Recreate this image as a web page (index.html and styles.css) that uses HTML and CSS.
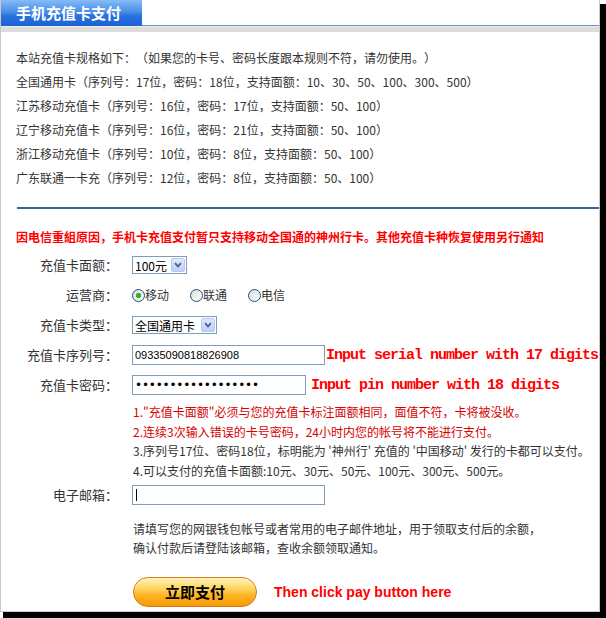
FILE: index.html
```html
<!DOCTYPE html>
<html lang="zh-CN">
<head>
  <meta charset="utf-8">
  <title>手机充值卡支付</title>
  <link rel="stylesheet" href="styles.css">
</head>
<body>

 <div class="frame">
  <div class="panel">
    <div class="tabbar">
      <div class="tab">手机充值卡支付</div>
      <div class="tabrest"></div>
    </div>
    <div class="band"></div>

    <div class="content">
      <ul class="rules">
        <li>本站充值卡规格如下：（如果您的卡号、密码长度跟本规则不符，请勿使用。）</li>
        <li>全国通用卡（序列号：17位，密码：18位，支持面额：10、30、50、100、300、500）</li>
        <li>江苏移动充值卡（序列号：16位，密码：17位，支持面额：50、100）</li>
        <li>辽宁移动充值卡（序列号：16位，密码：21位，支持面额：50、100）</li>
        <li>浙江移动充值卡（序列号：10位，密码：8位，支持面额：50、100）</li>
        <li>广东联通一卡充（序列号：12位，密码：8位，支持面额：50、100）</li>
      </ul>

      <div class="divider"></div>

      <p class="notice">因电信重組原因，手机卡充值支付暂只支持移动全国通的神州行卡。其他充值卡种恢复使用另行通知</p>

      <form class="payForm" onsubmit="return false;">
        <div class="row">
          <label for="amount">充值卡面额：</label>
          <div class="field">
            <span class="select selAmount">
              <select id="amount">
                <option>100元</option>
                <option>50元</option>
                <option>30元</option>
              </select>
              <i class="arrow"><svg width="8" height="6" viewBox="0 0 8 6"><path d="M1 1.2 L4 4.4 L7 1.2" stroke="#4d6185" stroke-width="1.8" fill="none"/></svg></i>
            </span>
          </div>
        </div>

        <div class="row">
          <label>运营商：</label>
          <div class="field radios">
            <label class="radio"><input type="radio" name="op" checked>移动</label>
            <label class="radio"><input type="radio" name="op">联通</label>
            <label class="radio"><input type="radio" name="op">电信</label>
          </div>
        </div>

        <div class="row">
          <label for="cardType">充值卡类型：</label>
          <div class="field">
            <span class="select selType">
              <select id="cardType">
                <option>全国通用卡</option>
                <option>江苏移动充值卡</option>
              </select>
              <i class="arrow"><svg width="8" height="6" viewBox="0 0 8 6"><path d="M1 1.2 L4 4.4 L7 1.2" stroke="#4d6185" stroke-width="1.8" fill="none"/></svg></i>
            </span>
          </div>
        </div>

        <div class="row">
          <label for="serial">充值卡序列号：</label>
          <div class="field">
            <input type="text" id="serial" class="textInput wide" value="09335090818826908">
            <span class="hint hintSerial">Input serial number with 17 digits</span>
          </div>
        </div>

        <div class="row">
          <label for="pin">充值卡密码：</label>
          <div class="field">
            <input type="password" id="pin" class="textInput pin" value="123456789012345678">
            <span class="hint hintPin">Input pin number with 18 digits</span>
          </div>
        </div>

        <ol class="notes">
          <li class="warn">1."充值卡面额"必须与您的充值卡标注面额相同，面值不符，卡将被没收。</li>
          <li class="warn">2.连续3次输入错误的卡号密码，24小时内您的帐号将不能进行支付。</li>
          <li>3.序列号17位、密码18位，标明能为 '神州行' 充值的 '中国移动' 发行的卡都可以支付。</li>
          <li>4.可以支付的充值卡面额:10元、30元、50元、100元、300元、500元。</li>
        </ol>

        <div class="row">
          <label for="email">电子邮箱：</label>
          <div class="field">
            <span class="caretWrap">
              <input type="text" id="email" class="textInput wide">
              <i class="caret"></i>
            </span>
          </div>
        </div>

        <p class="help">请填写您的网银钱包帐号或者常用的电子邮件地址，用于领取支付后的余额，<br>确认付款后请登陆该邮箱，查收余额领取通知。</p>

        <div class="payRow">
          <button type="submit" class="payBtn">立即支付</button>
          <span class="payHint">Then click pay button here</span>
        </div>
      </form>
    </div>
  </div>
 </div>

</body>
</html>
```

FILE: styles.css
```css
* {
  box-sizing: border-box;
}

body {
  margin: 0;
  background: #fff;
  color: #333;
  font-family: "Noto Sans CJK SC", sans-serif;
  font-size: 12px;
  text-spacing-trim: space-all;
}

/* black drop shadow on the right and bottom */
.frame {
  width: 606px;
  height: 618px;
  background:
    linear-gradient(#000, #000) right 0 bottom 0 / 6px 614px no-repeat,
    linear-gradient(#000, #000) right 0 bottom 0 / 603px 6px no-repeat;
}

.panel {
  width: 600px;
  height: 612px;
  border: 1px solid #c9c9c9;
  border-top: 0;
  background: #fff;
}

.tabbar {
  display: flex;
  height: 26px;
}

.tab {
  width: 141px;
  padding-left: 15px;
  background: linear-gradient(#86bbf6, #4a8fe9 45%, #2a72de 60%, #1b62d4);
  color: #fff;
  font-size: 15px;
  font-weight: bold;
  line-height: 26px;
}

.tabrest {
  flex: 1;
  border-bottom: 1px solid #5b8fd6;
}

.band {
  height: 6px;
  background: #dcdcdc;
  border-top: 1px solid #efefef;
}

.content {
  padding: 14px 0 0 15px;
}

.rules {
  margin: 0;
  padding: 0;
  list-style: none;
  line-height: 24px;
  white-space: nowrap;
}

.divider {
  height: 2px;
  margin: 17px 0 0 1px;
  background: #35679f;
}

.notice {
  margin: 18px 0 0;
  color: #f00;
  font-weight: bold;
  line-height: 20px;
  white-space: nowrap;
}

.payForm {
  margin-top: 3px;
}

.row {
  display: grid;
  grid-template-columns: 102px 1fr;
  column-gap: 14px;
  align-items: center;
  height: 30px;
}

.row > label {
  text-align: right;
  font-size: 13px;
  line-height: 20px;
  white-space: nowrap;
}

.field {
  display: flex;
  align-items: center;
}

.select {
  position: relative;
  display: inline-block;
  height: 18px;
  border: 1px solid #7f9db9;
  background: #fff;
}

.select select {
  appearance: none;
  width: 100%;
  height: 16px;
  padding: 0 0 0 2px;
  border: 0;
  background: transparent;
  color: #000;
  font-family: "Noto Sans CJK SC", sans-serif;
  font-size: 12px;
  line-height: 16px;
}

.selAmount {
  width: 55px;
}

.selType {
  width: 85px;
}

.arrow {
  position: absolute;
  top: 1px;
  right: 1px;
  width: 14px;
  height: 14px;
  display: flex;
  align-items: center;
  justify-content: center;
  border: 1px solid #b5c8f2;
  border-radius: 2px;
  background: linear-gradient(#dfe8fd, #bccff8);
  pointer-events: none;
}

.radios {
  gap: 21px;
}

.radio {
  display: flex;
  align-items: center;
  font-size: 12px;
  line-height: 20px;
}

.radio input {
  appearance: none;
  width: 13px;
  height: 13px;
  margin: 0;
  border: 1px solid #1c5180;
  border-radius: 50%;
  background: linear-gradient(135deg, #dcdcd5, #fff);
}

.radio input:checked {
  background: radial-gradient(circle, #2fb32f 0 2.4px, transparent 3px), linear-gradient(135deg, #dcdcd5, #fff);
}

.textInput {
  height: 20px;
  padding: 0 2px;
  border: 1px solid #7f9db9;
  color: #000;
  font-family: "Liberation Sans", sans-serif;
  font-size: 11px;
  outline: none;
}

.wide {
  width: 193px;
}

.pin {
  width: 174px;
  font-family: "DejaVu Sans", sans-serif;
  font-size: 12px;
  letter-spacing: -0.2px;
}

.caretWrap {
  position: relative;
  display: inline-block;
}

.caret {
  position: absolute;
  left: 4px;
  top: 4px;
  width: 1px;
  height: 12px;
  background: #000;
}

.hint {
  color: #f00;
  font-family: "Liberation Mono", monospace;
  font-size: 15px;
  font-weight: bold;
  letter-spacing: -1px;
  white-space: nowrap;
}

.hintSerial {
  margin-left: 1px;
}

.hintPin {
  margin-left: 5px;
}

.notes {
  margin: 2px 0 0 117px;
  padding: 0;
  list-style: none;
  line-height: 19.5px;
  white-space: nowrap;
}

.notes .warn {
  color: #d80000;
}

.help {
  margin: 9px 0 0 117px;
  line-height: 19px;
  white-space: nowrap;
}

.payRow {
  display: flex;
  align-items: center;
  margin: 20px 0 0 117px;
}

.payBtn {
  width: 124px;
  height: 30px;
  border: 1px solid #d9760c;
  border-radius: 15px;
  background: linear-gradient(#fff2b5, #ffd25c 40%, #ffb322 62%, #f59a06);
  box-shadow: inset 0 1px 0 #fff8d8;
  color: #000;
  font-family: "Noto Sans CJK SC", sans-serif;
  font-size: 15px;
  font-weight: bold;
  line-height: 26px;
  cursor: pointer;
}

.payHint {
  margin-left: 17px;
  color: #f00;
  font-family: "Liberation Sans", sans-serif;
  font-size: 14px;
  font-weight: bold;
}
```
